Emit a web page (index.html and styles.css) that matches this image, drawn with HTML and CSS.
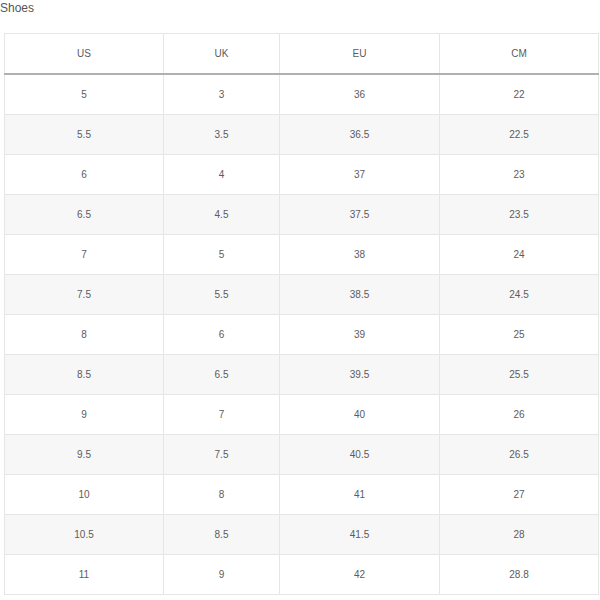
FILE: index.html
```html
<!DOCTYPE html>
<html>
<head>
<meta charset="utf-8">
<link rel="stylesheet" href="styles.css">
</head>
<body>
<div class="title">Shoes</div>
<table class="sizes">
<colgroup><col class="c1"><col class="c2"><col class="c3"><col class="c4"></colgroup>
<thead><tr><th>US</th><th>UK</th><th>EU</th><th>CM</th></tr></thead>
<tbody>
<tr><td>5</td><td>3</td><td>36</td><td>22</td></tr>
<tr><td>5.5</td><td>3.5</td><td>36.5</td><td>22.5</td></tr>
<tr><td>6</td><td>4</td><td>37</td><td>23</td></tr>
<tr><td>6.5</td><td>4.5</td><td>37.5</td><td>23.5</td></tr>
<tr><td>7</td><td>5</td><td>38</td><td>24</td></tr>
<tr><td>7.5</td><td>5.5</td><td>38.5</td><td>24.5</td></tr>
<tr><td>8</td><td>6</td><td>39</td><td>25</td></tr>
<tr><td>8.5</td><td>6.5</td><td>39.5</td><td>25.5</td></tr>
<tr><td>9</td><td>7</td><td>40</td><td>26</td></tr>
<tr><td>9.5</td><td>7.5</td><td>40.5</td><td>26.5</td></tr>
<tr><td>10</td><td>8</td><td>41</td><td>27</td></tr>
<tr><td>10.5</td><td>8.5</td><td>41.5</td><td>28</td></tr>
<tr><td>11</td><td>9</td><td>42</td><td>28.8</td></tr>
</tbody>
</table>
</body>
</html>
```
FILE: styles.css
```css
html, body { margin: 0; padding: 0; background: #fff; }
body { font-family: "Liberation Sans", Arial, sans-serif; color: #555; }
.title { font-size: 12px; line-height: 14px; padding: 1px 0 0 0; height: 33px; box-sizing: border-box; color: #555; }
.sizes { margin-left: 4px; width: 594px; border-collapse: collapse; table-layout: fixed; font-size: 10px; }
.c1 { width: 159px; }
.c2 { width: 116px; }
.c3 { width: 160px; }
.c4 { width: 159px; }
.sizes th, .sizes td { border: 1px solid #e6e6e6; text-align: center; padding: 0; font-weight: normal; color: #5c5c5c; }
.sizes th { height: 40px; padding-top: 1px; box-sizing: border-box; border-bottom: 2px solid #b0b0b0; }
.sizes td { height: 39px; }
.sizes tbody tr:nth-child(even) td { background: #f7f7f7; }
```
